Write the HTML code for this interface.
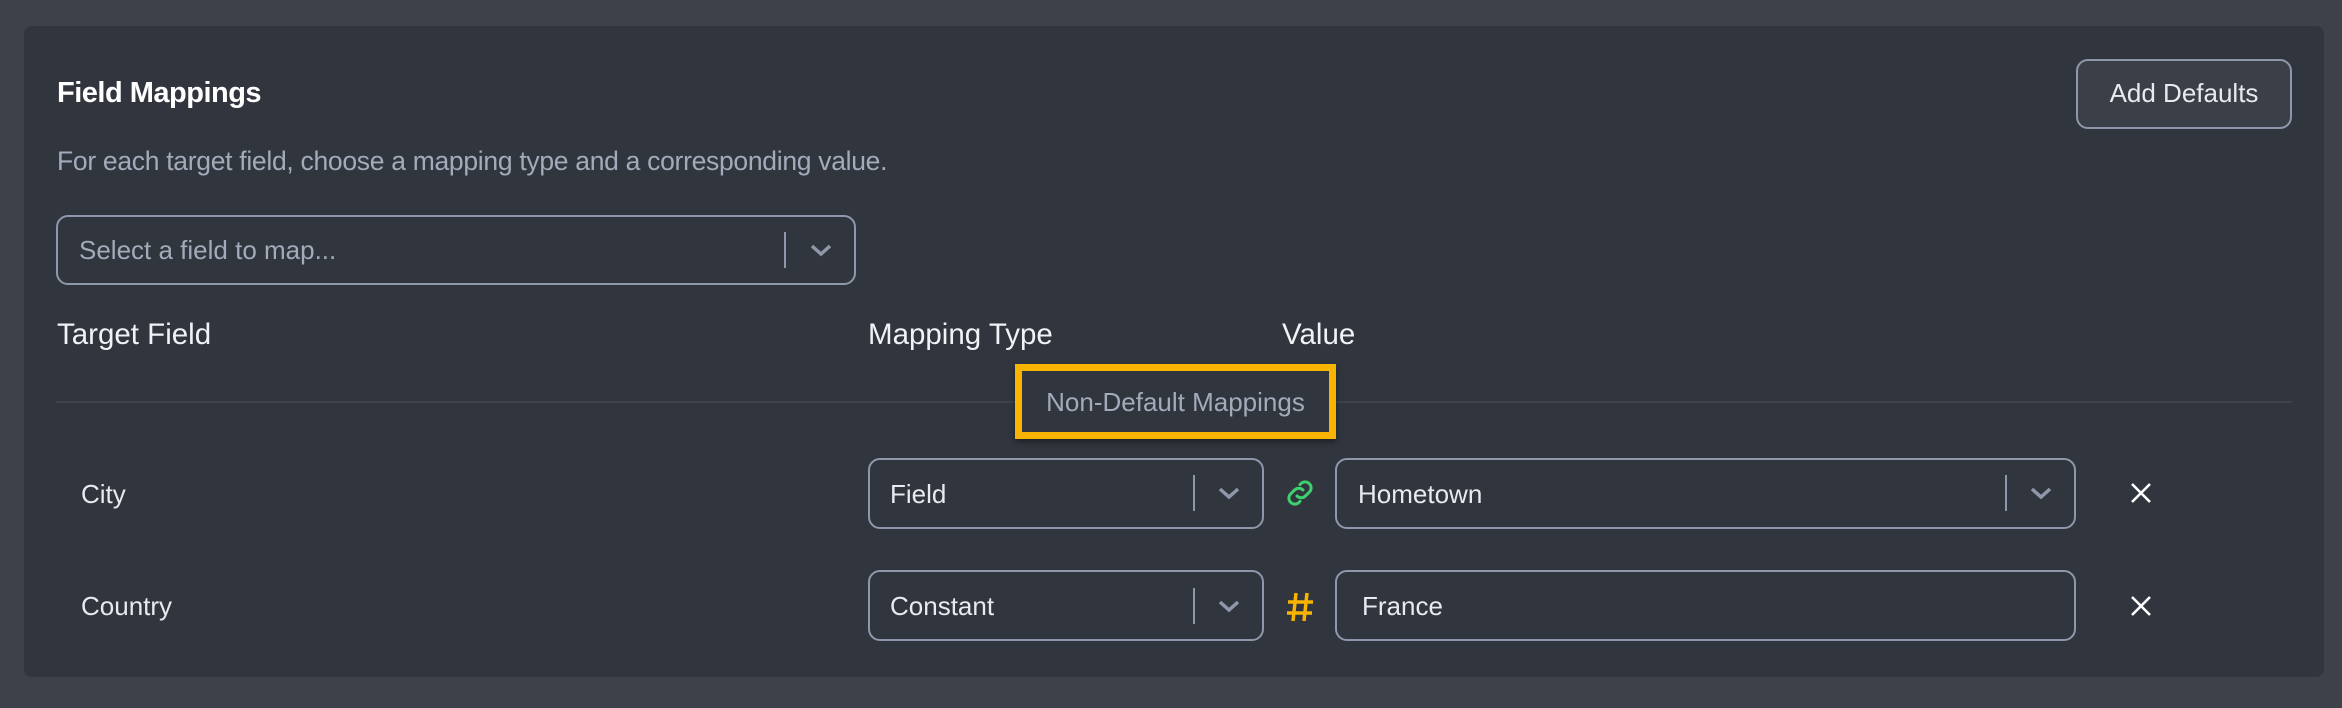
<!DOCTYPE html>
<html><head><style>
*{box-sizing:border-box;margin:0;padding:0}
body{width:2342px;height:708px;background:#3d4149;font-family:"Liberation Sans",sans-serif;position:relative;overflow:hidden}
.card{position:absolute;left:24px;top:26px;width:2300px;height:651px;background:#31353d;border-radius:8px}
.a{position:absolute;white-space:nowrap}
.box{position:absolute;border:2px solid #8f98aa;border-radius:12px}
.sep{position:absolute;width:2px;height:36px;background:#8f98aa}
.t{color:#e8eaee;font-size:26px}
</style></head><body>
<div class="card"></div>
<div class="a" style="left:57px;top:77px;font-size:29px;font-weight:bold;color:#fff;letter-spacing:-0.5px">Field Mappings</div>
<div class="a" style="left:57px;top:146px;font-size:26.5px;color:#a3abba;letter-spacing:-0.3px">For each target field, choose a mapping type and a corresponding value.</div>
<div class="box" style="left:2076px;top:59px;width:216px;height:70px;background:#3b3f47;"></div>
<div class="a t" style="left:2076px;width:216px;text-align:center;top:78px">Add Defaults</div>

<div class="box" style="left:56px;top:215px;width:800px;height:70px"></div>
<div class="a" style="left:79px;top:235px;font-size:26px;color:#a3abba">Select a field to map...</div>
<div class="sep" style="left:784px;top:232px"></div>
<svg class="a" style="left:808px;top:242px" width="26" height="16"><path d="M4 4l9 8 9-8" fill="none" stroke="#8f98aa" stroke-width="3.5"/></svg>

<div class="a" style="left:57px;top:318px;font-size:29.5px;color:#f0f2f5">Target Field</div>
<div class="a" style="left:868px;top:318px;font-size:29.5px;color:#f0f2f5">Mapping Type</div>
<div class="a" style="left:1282px;top:318px;font-size:29.5px;color:#f0f2f5">Value</div>
<div class="a" style="left:56px;top:401px;width:2236px;height:2px;background:#3d424b"></div>
<div class="a" style="left:1015px;top:364px;width:321px;height:75px;border:7px solid #f8b400;background:#31353d;box-shadow:0 3px 6px rgba(0,0,0,.4)"></div>
<div class="a" style="left:1015px;width:321px;text-align:center;top:387px;font-size:26px;color:#a3abba">Non-Default Mappings</div>

<!-- row 1 -->
<div class="a t" style="left:81px;top:479px">City</div>
<div class="box" style="left:868px;top:458px;width:396px;height:71px"></div>
<div class="a t" style="left:890px;top:479px">Field</div>
<div class="sep" style="left:1193px;top:475px"></div>
<svg class="a" style="left:1216px;top:485px" width="26" height="16"><path d="M4 4l9 8 9-8" fill="none" stroke="#8f98aa" stroke-width="3.5"/></svg>
<svg class="a" style="left:1282px;top:475px" width="36" height="36" viewBox="0 0 24 24"><path d="M10 14a4 4 0 0 0 5.6 0l3-3a4 4 0 0 0-5.6-5.6l-1 1M14 10a4 4 0 0 0-5.6 0l-3 3a4 4 0 0 0 5.6 5.6l1-1" fill="none" stroke="#3ecf6e" stroke-width="2" stroke-linecap="round"/></svg>
<div class="box" style="left:1335px;top:458px;width:741px;height:71px"></div>
<div class="a t" style="left:1358px;top:479px">Hometown</div>
<div class="sep" style="left:2005px;top:475px"></div>
<svg class="a" style="left:2028px;top:485px" width="26" height="16"><path d="M4 4l9 8 9-8" fill="none" stroke="#8f98aa" stroke-width="3.5"/></svg>
<svg class="a" style="left:2129px;top:481px" width="24" height="24"><path d="M3 3l18 18M21 3L3 21" stroke="#fff" stroke-width="2.6"/></svg>

<!-- row 2 -->
<div class="a t" style="left:81px;top:591px">Country</div>
<div class="box" style="left:868px;top:570px;width:396px;height:71px"></div>
<div class="a t" style="left:890px;top:591px">Constant</div>
<div class="sep" style="left:1193px;top:588px"></div>
<svg class="a" style="left:1216px;top:598px" width="26" height="16"><path d="M4 4l9 8 9-8" fill="none" stroke="#8f98aa" stroke-width="3.5"/></svg>
<svg class="a" style="left:1284px;top:589px" width="32" height="36" viewBox="0 0 32 36"><path d="M12 4L9 32M23 4L20 32M4 13h25M3 24h25" stroke="#f8b400" stroke-width="3.5" fill="none"/></svg>
<div class="box" style="left:1335px;top:570px;width:741px;height:71px"></div>
<div class="a t" style="left:1362px;top:591px">France</div>
<svg class="a" style="left:2129px;top:594px" width="24" height="24"><path d="M3 3l18 18M21 3L3 21" stroke="#fff" stroke-width="2.6"/></svg>
</body></html>
